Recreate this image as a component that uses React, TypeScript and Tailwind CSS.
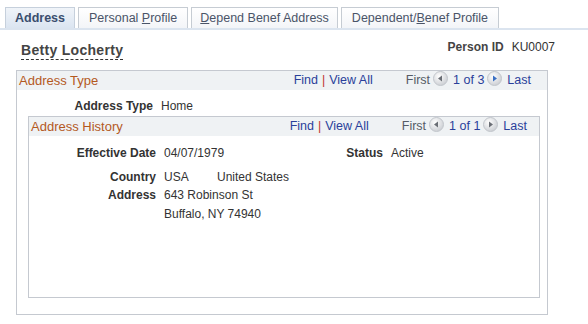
const font = { fontFamily: '"Liberation Sans", Arial, sans-serif' };

function Tab({ children, active, tight }: { children: React.ReactNode; active?: boolean; tight?: boolean }) {
  return (
    <div
      className={
        active
          ? "h-[21px] px-[9px] flex items-center border border-b-0 border-[#c6d0dc] bg-gradient-to-b from-[#f0f4f9] to-[#dbe5f1] text-[12.5px] font-bold text-[#3a4e6e]"
          : `h-[21px] ${tight ? "px-[8px]" : "px-[10px]"} flex items-center border border-b-0 border-[#c6ccd3] bg-gradient-to-b from-white to-[#f3f5f8] text-[12.5px] text-[#4a5468]`
      }
    >
      {children}
    </div>
  );
}

function Arrow({ dir, blue }: { dir: "left" | "right"; blue?: boolean }) {
  const id = `g${dir}${blue ? "b" : ""}`;
  return (
    <svg width="15" height="15" viewBox="0 0 15 15" className="ml-[3px] mr-[5px] -mt-[4px]">
      <defs>
        <radialGradient id={id} cx="40%" cy="35%" r="70%">
          <stop offset="0%" stopColor="#ffffff" />
          <stop offset="100%" stopColor="#c9ccd1" />
        </radialGradient>
      </defs>
      <circle cx="7.5" cy="7.5" r="7" fill={`url(#${id})`} stroke="#c2c6cc" />
      {dir === "left" ? (
        <path d="M5 7.5 L9 4.5 L9 10.5 Z" fill="#6a6e75" />
      ) : (
        <path d="M10 7.5 L6 4.5 L6 10.5 Z" fill={blue ? "#3a6fc4" : "#6a6e75"} />
      )}
    </svg>
  );
}

function Nav({ count, nextBlue }: { count: string; nextBlue?: boolean }) {
  return (
    <div className="flex items-center text-[12.5px] text-[#2a3f9a]">
      <span>Find</span>
      <span className="mx-[4px] text-[#c03030]">|</span>
      <span>View All</span>
      <span className="ml-[33px] text-[#555b66]">First</span>
      <Arrow dir="left" />
      <span className="text-[#2a3f9a]">{count}</span>
      <Arrow dir="right" blue={nextBlue} />
      <span className="text-[#2a3f9a]">Last</span>
    </div>
  );
}

export default function App() {
  return (
    <div style={font} className="w-[588px] h-[324px] bg-white text-[12px] text-[#333333] overflow-hidden">
      <div className="flex gap-[3px] pl-[5px] pt-[7px]">
        <Tab active>Address</Tab>
        <Tab>
          Personal&nbsp;<u>P</u>rofile
        </Tab>
        <Tab tight>
          <u>D</u>epend Benef Address
        </Tab>
        <Tab>
          Dependent/<u>B</u>enef Profile
        </Tab>
      </div>
      <div className="h-[2px] bg-[#dbe4ef]" />

      <div className="flex items-end justify-between pl-[21px] pr-[33px] pt-[7px] h-[30px]">
        <span className="text-[14px] tracking-[0.3px] font-bold text-[#444444] border-b border-dashed border-[#333] leading-[17px]">
          Betty Locherty
        </span>
        <span className="pb-[4px]">
          <b className="text-[#444]">Person ID</b>
          <span className="ml-[8px]">KU0007</span>
        </span>
      </div>

      <div className="ml-[16px] mt-[10px] w-[532px] h-[245px] border border-[#c5c9d0] flex flex-col">
        <div className="h-[19px] bg-[#eff2f4] flex items-center justify-between pl-[2px] pr-[16px]">
          <span className="text-[13px] text-[#b4591e]">Address Type</span>
          <Nav count="1 of 3" nextBlue />
        </div>
        <div className="flex mt-[7px] h-[18px] items-center">
          <span className="w-[136px] text-right font-bold">Address Type</span>
          <span className="ml-[8px]">Home</span>
        </div>
        <div className="ml-[11px] mt-[1px] w-[512px] h-[182px] border border-[#c5c9d0]">
          <div className="h-[19px] bg-[#eff2f4] flex items-center justify-between pl-[2px] pr-[12px]">
            <span className="text-[13px] text-[#b4591e]">Address History</span>
            <Nav count="1 of 1" />
          </div>
          <div className="flex mt-[8px] h-[18px] items-center">
            <span className="w-[127px] text-right font-bold">Effective Date</span>
            <span className="ml-[8px] w-[169px]">04/07/1979</span>
            <span className="w-[50px] text-right font-bold">Status</span>
            <span className="ml-[8px]">Active</span>
          </div>
          <div className="flex mt-[6px] h-[18px] items-center">
            <span className="w-[127px] text-right font-bold">Country</span>
            <span className="ml-[8px] w-[53px]">USA</span>
            <span>United States</span>
          </div>
          <div className="flex h-[18px] items-center">
            <span className="w-[127px] text-right font-bold">Address</span>
            <span className="ml-[8px]">643 Robinson St</span>
          </div>
          <div className="flex h-[19px] items-center">
            <span className="ml-[135px]">Buffalo, NY 74940</span>
          </div>
        </div>
      </div>
    </div>
  );
}
